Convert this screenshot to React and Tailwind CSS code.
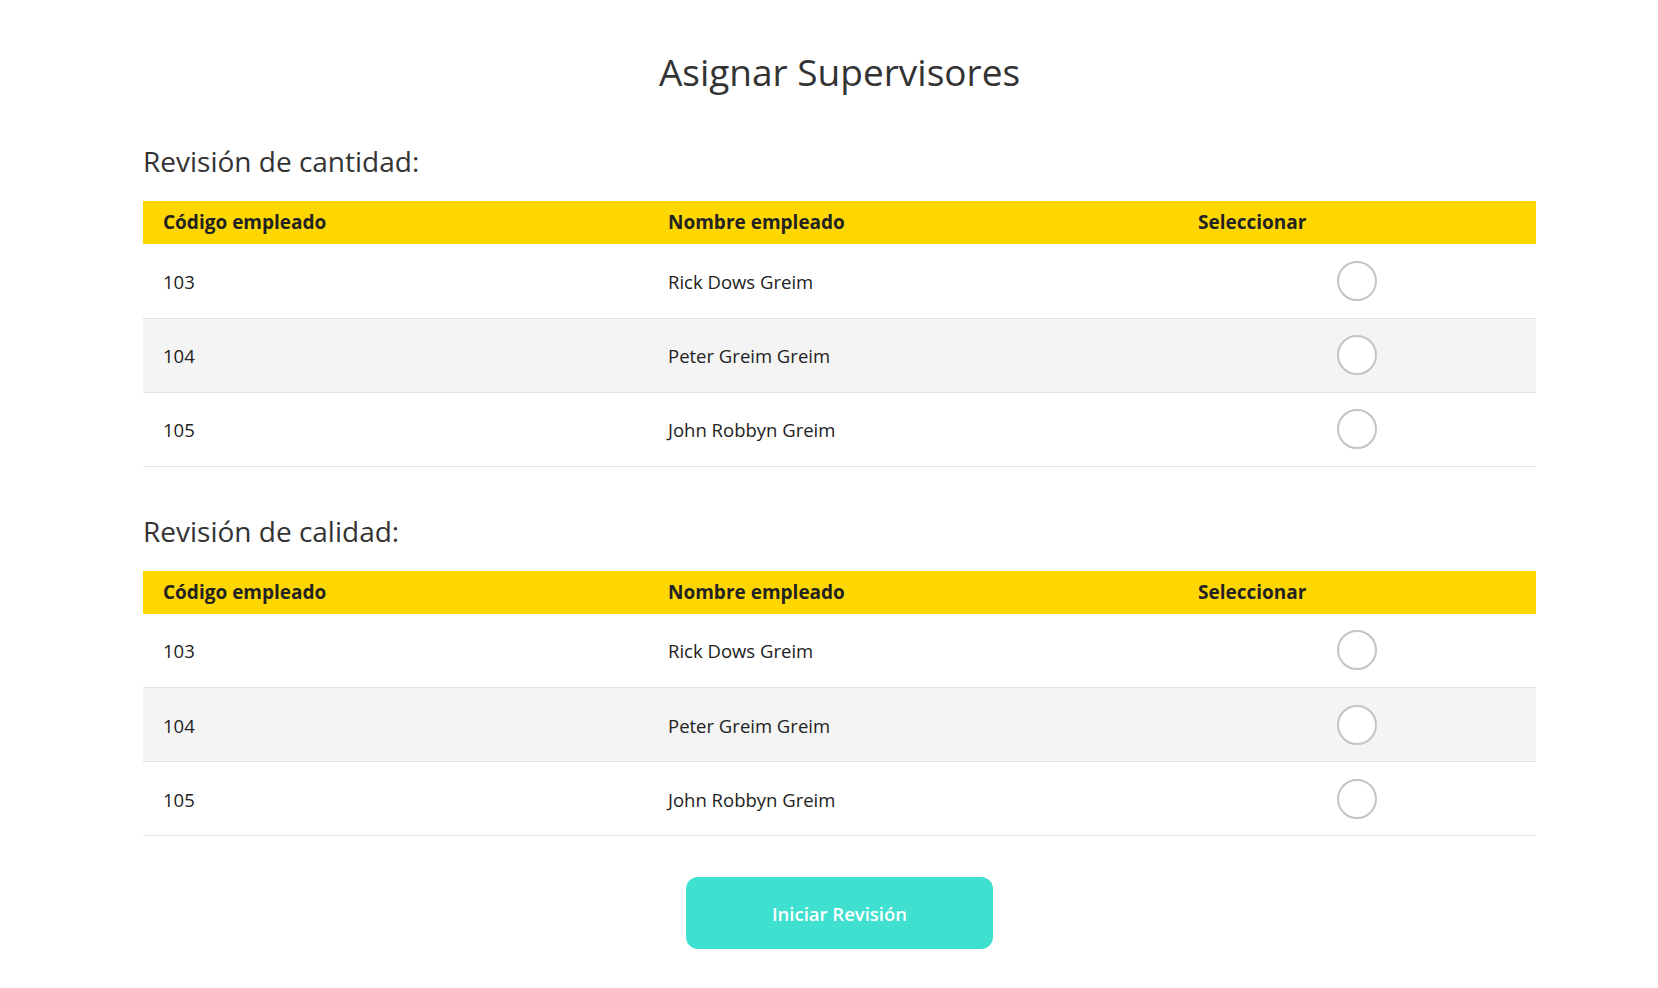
import React, { useState } from "react";

const empleados = [
  { codigo: "103", nombre: "Rick Dows Greim" },
  { codigo: "104", nombre: "Peter Greim Greim" },
  { codigo: "105", nombre: "John Robbyn Greim" },
];

function TablaSupervisores({ titulo, seleccion, onSelect, className }) {
  return (
    <section className={className}>
      <h2 className="text-[28px] leading-[34px] font-normal text-[#333]">{titulo}</h2>
      <table className="mt-[23px] w-full table-fixed border-collapse text-[18.5px] text-[#222]">
        <thead>
          <tr className="bg-[#ffd700] h-[43px] text-[19px]">
            <th className="w-[505px] pl-5 text-left font-bold">Código empleado</th>
            <th className="w-[530px] pl-5 text-left font-bold">Nombre empleado</th>
            <th className="pl-5 text-left font-bold">Seleccionar</th>
          </tr>
        </thead>
        <tbody>
          {empleados.map((emp, i) => (
            <tr
              key={emp.codigo}
              className={`h-[74px] border-b border-[#e3e3e3] ${i % 2 === 1 ? "bg-[#f4f4f4]" : "bg-white"}`}
            >
              <td className="pl-5 pt-[2px]">{emp.codigo}</td>
              <td className="pl-5 pt-[2px]">{emp.nombre}</td>
              <td>
                <div className="flex justify-center">
                  <button
                    type="button"
                    onClick={() => onSelect(emp.codigo)}
                    className="w-10 h-10 rounded-full border-2 border-[#c4c4c4] bg-white flex items-center justify-center"
                  >
                    {seleccion === emp.codigo && <span className="w-5 h-5 rounded-full bg-[#40e0d0]" />}
                  </button>
                </div>
              </td>
            </tr>
          ))}
        </tbody>
      </table>
    </section>
  );
}

export default function App() {
  const [cantidad, setCantidad] = useState(null);
  const [calidad, setCalidad] = useState(null);

  return (
    <div className="min-h-screen bg-white font-['Open_Sans',sans-serif] text-[#333] pl-[143px] pr-[122px] pt-[50px] pb-10">
      <h1 className="text-center text-[37px] leading-[43px] font-normal text-[#333]">Asignar Supervisores</h1>

      <TablaSupervisores
        className="mt-[51px]"
        titulo="Revisión de cantidad:"
        seleccion={cantidad}
        onSelect={setCantidad}
      />

      <TablaSupervisores
        className="mt-[47px]"
        titulo="Revisión de calidad:"
        seleccion={calidad}
        onSelect={setCalidad}
      />

      <div className="mt-[41px] flex justify-center">
        <button
          type="button"
          className="w-[307px] h-[72px] rounded-xl bg-[#40e0d0] text-white text-[18.5px] font-semibold pt-[2px]"
        >
          Iniciar Revisión
        </button>
      </div>
    </div>
  );
}
